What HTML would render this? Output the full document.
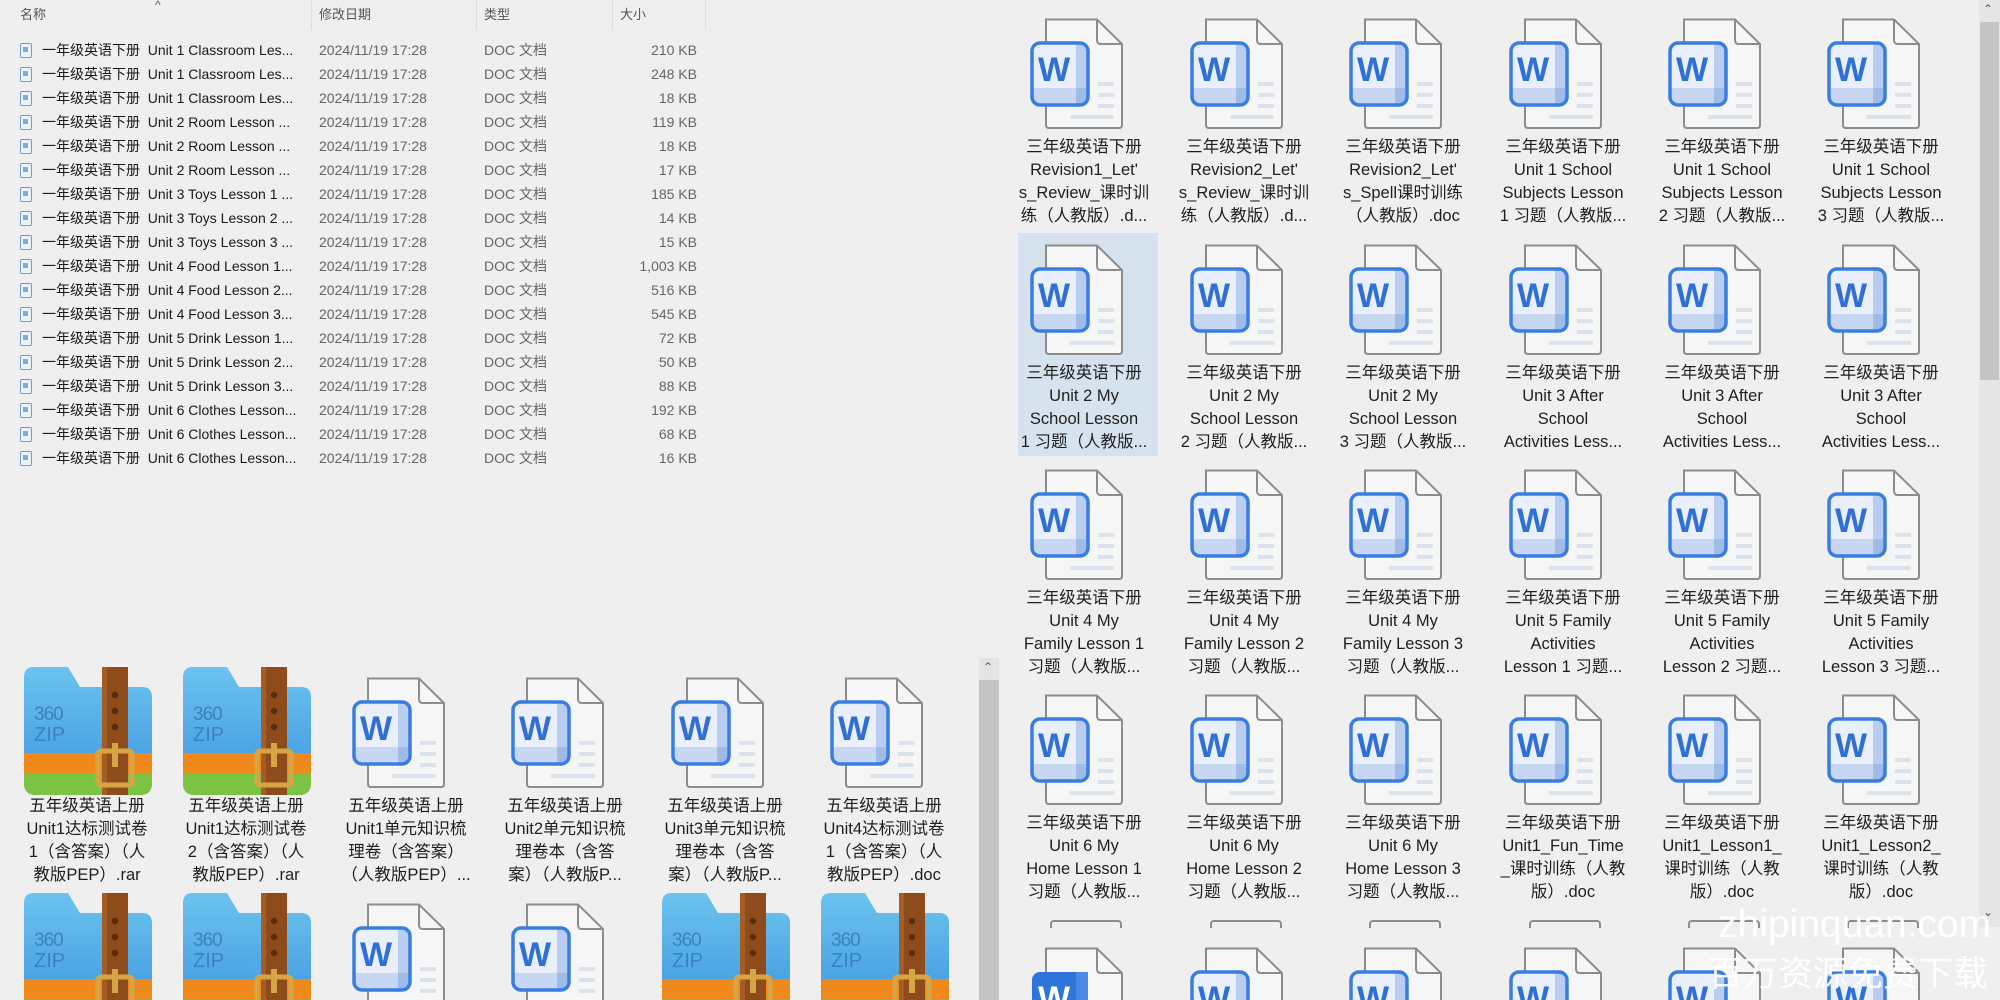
<!DOCTYPE html>
<html><head><meta charset="utf-8">
<style>
*{box-sizing:border-box}
html,body{margin:0;width:2000px;height:1000px;overflow:hidden}
body{background:#efefef;font-family:"Liberation Sans","Noto Sans CJK SC",sans-serif;color:#1e1e1e}
#wrap{position:relative;width:2000px;height:1000px;overflow:hidden}
.hd{position:absolute;top:0;height:30px;font-size:13px;color:#555;line-height:30px}
.sep{position:absolute;top:0;width:1px;height:30px;background:#dedede}
.row{position:absolute;left:0;width:720px;height:24px;font-size:14px;line-height:24px;white-space:nowrap}
.row .ic{position:absolute;left:20px;top:5px;width:12px;height:15px;border:1.5px solid #6e9bd8;border-radius:2px;background:#eef4fc}
.row .ic:after{content:"";position:absolute;left:2px;top:3px;width:5px;height:5px;background:#7fa8e0}
.row .n{position:absolute;left:42px;color:#1a1a1a}
.row .d{position:absolute;left:319px;color:#666}
.row .t{position:absolute;left:484px;color:#666}
.row .s{position:absolute;left:600px;width:97px;text-align:right;color:#666}
.it{position:absolute;width:160px;height:215px}
.it svg{position:absolute;left:16px;top:0;width:128px;height:112px;overflow:visible}
.it .w{position:absolute;left:28px;top:32px;width:44px;text-align:center;font:bold 34px/40px "Liberation Sans",sans-serif;color:#2f6fd6}
.it .w.f{color:#fff}
.it p{position:absolute;top:118px;left:0;width:160px;margin:0;text-align:center;font-size:16.5px;line-height:23px;color:#1e1e1e;white-space:nowrap}
.it .z3{position:absolute;left:27px;top:28px;font:19px/20px "Liberation Sans",sans-serif;color:#3b80c2;letter-spacing:-1px}
.it .z4{position:absolute;left:27px;top:47px;font:20px/22px "Liberation Sans",sans-serif;color:#3b80c2}
.sel{position:absolute;left:1018px;top:233px;width:140px;height:223px;background:#d6e3ef}
</style></head><body><div id="wrap">
<svg width="0" height="0" style="position:absolute">
<defs>
<symbol id="doc" viewBox="0 0 128 112">
<path d="M26 1.5H77L102 26V107Q102 110 99 110H29Q26 110 26 107Z" fill="#f6f6f6" stroke="#8c8c8c" stroke-width="2"/>
<path d="M77 1.5V22Q77 26 81 26H102" fill="none" stroke="#8c8c8c" stroke-width="2"/>
<rect x="78" y="64" width="16" height="4" fill="#dbe2ec"/>
<rect x="78" y="75" width="16" height="4" fill="#dbe2ec"/>
<rect x="78" y="86" width="16" height="4" fill="#dbe2ec"/>
<rect x="50" y="97" width="44" height="4" fill="#dbe2ec"/>
<rect x="12" y="25" width="56" height="62" rx="8" fill="#e9f0fb"/>
<rect x="13" y="70" width="54" height="16" fill="#c7d7f2"/>
<rect x="56" y="26" width="11" height="60" fill="#b8cdef"/>
<rect x="56" y="70" width="11" height="16" fill="#9fbbe9"/>
<rect x="12" y="25" width="56" height="62" rx="8" fill="none" stroke="#3a7de0" stroke-width="3.5"/>
</symbol>
<symbol id="docf" viewBox="0 0 128 112">
<path d="M26 1.5H77L102 26V107Q102 110 99 110H29Q26 110 26 107Z" fill="#f6f6f6" stroke="#8c8c8c" stroke-width="2"/>
<path d="M77 1.5V22Q77 26 81 26H102" fill="none" stroke="#8c8c8c" stroke-width="2"/>
<rect x="12" y="25" width="56" height="62" rx="8" fill="#2f74da"/>
<rect x="56" y="25" width="12" height="62" fill="#4a8ae6"/>
</symbol>
<clipPath id="zc"><path d="M0 10Q0 0 10 0H44L56 20H118Q128 20 128 30V116Q128 128 116 128H12Q0 128 0 116Z"/></clipPath>
<linearGradient id="zg" x1="0" y1="0" x2="0" y2="1"><stop offset="0" stop-color="#6cc3ef"/><stop offset="1" stop-color="#3b95dc"/></linearGradient>
<symbol id="zip" viewBox="0 0 128 128">
<g clip-path="url(#zc)">
<rect width="128" height="128" fill="url(#zg)"/>
<rect y="86" width="128" height="20" fill="#f0891b"/>
<rect y="106" width="128" height="22" fill="#7cc243"/>
</g>
<rect x="78" y="0" width="26" height="128" fill="#8e4c1c"/>
<rect x="78" y="0" width="5" height="128" fill="#a55d25"/>
<circle cx="91" cy="28" r="3.2" fill="#5a2c0c"/>
<circle cx="91" cy="44" r="3.2" fill="#5a2c0c"/>
<circle cx="91" cy="60" r="3.2" fill="#5a2c0c"/>
<rect x="74" y="84" width="34" height="34" rx="3" fill="none" stroke="#d8a545" stroke-width="5"/>
<rect x="88" y="76" width="6" height="24" fill="#d8a545"/>
</symbol>
</defs></svg>

<div class="hd" style="left:20px">名称</div>
<div class="hd" style="left:155px;top:-10px;font-size:12px">^</div>
<div class="hd" style="left:319px">修改日期</div>
<div class="hd" style="left:484px">类型</div>
<div class="hd" style="left:620px">大小</div>
<div class="sep" style="left:311px"></div>
<div class="sep" style="left:476px"></div>
<div class="sep" style="left:612px"></div>
<div class="sep" style="left:705px"></div>

<div class="row" style="top:38px"><i class="ic"></i><span class="n">一年级英语下册&nbsp; Unit 1 Classroom Les...</span><span class="d">2024/11/19 17:28</span><span class="t">DOC 文档</span><span class="s">210 KB</span></div>
<div class="row" style="top:62px"><i class="ic"></i><span class="n">一年级英语下册&nbsp; Unit 1 Classroom Les...</span><span class="d">2024/11/19 17:28</span><span class="t">DOC 文档</span><span class="s">248 KB</span></div>
<div class="row" style="top:86px"><i class="ic"></i><span class="n">一年级英语下册&nbsp; Unit 1 Classroom Les...</span><span class="d">2024/11/19 17:28</span><span class="t">DOC 文档</span><span class="s">18 KB</span></div>
<div class="row" style="top:110px"><i class="ic"></i><span class="n">一年级英语下册&nbsp; Unit 2 Room Lesson ...</span><span class="d">2024/11/19 17:28</span><span class="t">DOC 文档</span><span class="s">119 KB</span></div>
<div class="row" style="top:134px"><i class="ic"></i><span class="n">一年级英语下册&nbsp; Unit 2 Room Lesson ...</span><span class="d">2024/11/19 17:28</span><span class="t">DOC 文档</span><span class="s">18 KB</span></div>
<div class="row" style="top:158px"><i class="ic"></i><span class="n">一年级英语下册&nbsp; Unit 2 Room Lesson ...</span><span class="d">2024/11/19 17:28</span><span class="t">DOC 文档</span><span class="s">17 KB</span></div>
<div class="row" style="top:182px"><i class="ic"></i><span class="n">一年级英语下册&nbsp; Unit 3 Toys Lesson 1 ...</span><span class="d">2024/11/19 17:28</span><span class="t">DOC 文档</span><span class="s">185 KB</span></div>
<div class="row" style="top:206px"><i class="ic"></i><span class="n">一年级英语下册&nbsp; Unit 3 Toys Lesson 2 ...</span><span class="d">2024/11/19 17:28</span><span class="t">DOC 文档</span><span class="s">14 KB</span></div>
<div class="row" style="top:230px"><i class="ic"></i><span class="n">一年级英语下册&nbsp; Unit 3 Toys Lesson 3 ...</span><span class="d">2024/11/19 17:28</span><span class="t">DOC 文档</span><span class="s">15 KB</span></div>
<div class="row" style="top:254px"><i class="ic"></i><span class="n">一年级英语下册&nbsp; Unit 4 Food Lesson 1...</span><span class="d">2024/11/19 17:28</span><span class="t">DOC 文档</span><span class="s">1,003 KB</span></div>
<div class="row" style="top:278px"><i class="ic"></i><span class="n">一年级英语下册&nbsp; Unit 4 Food Lesson 2...</span><span class="d">2024/11/19 17:28</span><span class="t">DOC 文档</span><span class="s">516 KB</span></div>
<div class="row" style="top:302px"><i class="ic"></i><span class="n">一年级英语下册&nbsp; Unit 4 Food Lesson 3...</span><span class="d">2024/11/19 17:28</span><span class="t">DOC 文档</span><span class="s">545 KB</span></div>
<div class="row" style="top:326px"><i class="ic"></i><span class="n">一年级英语下册&nbsp; Unit 5 Drink Lesson 1...</span><span class="d">2024/11/19 17:28</span><span class="t">DOC 文档</span><span class="s">72 KB</span></div>
<div class="row" style="top:350px"><i class="ic"></i><span class="n">一年级英语下册&nbsp; Unit 5 Drink Lesson 2...</span><span class="d">2024/11/19 17:28</span><span class="t">DOC 文档</span><span class="s">50 KB</span></div>
<div class="row" style="top:374px"><i class="ic"></i><span class="n">一年级英语下册&nbsp; Unit 5 Drink Lesson 3...</span><span class="d">2024/11/19 17:28</span><span class="t">DOC 文档</span><span class="s">88 KB</span></div>
<div class="row" style="top:398px"><i class="ic"></i><span class="n">一年级英语下册&nbsp; Unit 6 Clothes Lesson...</span><span class="d">2024/11/19 17:28</span><span class="t">DOC 文档</span><span class="s">192 KB</span></div>
<div class="row" style="top:422px"><i class="ic"></i><span class="n">一年级英语下册&nbsp; Unit 6 Clothes Lesson...</span><span class="d">2024/11/19 17:28</span><span class="t">DOC 文档</span><span class="s">68 KB</span></div>
<div class="row" style="top:446px"><i class="ic"></i><span class="n">一年级英语下册&nbsp; Unit 6 Clothes Lesson...</span><span class="d">2024/11/19 17:28</span><span class="t">DOC 文档</span><span class="s">16 KB</span></div>

<div class="it" style="left:7px;top:677px"><svg viewBox="0 0 128 128" style="top:-10px;left:17px;height:128px"><use href="#zip"/></svg><span class="z3">360</span><span class="z4">ZIP</span><p>五年级英语上册<br>Unit1达标测试卷<br>1（含答案）（人<br>教版PEP）.rar</p></div>
<div class="it" style="left:166px;top:677px"><svg viewBox="0 0 128 128" style="top:-10px;left:17px;height:128px"><use href="#zip"/></svg><span class="z3">360</span><span class="z4">ZIP</span><p>五年级英语上册<br>Unit1达标测试卷<br>2（含答案）（人<br>教版PEP）.rar</p></div>
<div class="it" style="left:326px;top:677px"><svg viewBox="0 0 128 112"><use href="#doc"/></svg><b class="w">W</b><p>五年级英语上册<br>Unit1单元知识梳<br>理卷（含答案）<br>（人教版PEP）...</p></div>
<div class="it" style="left:485px;top:677px"><svg viewBox="0 0 128 112"><use href="#doc"/></svg><b class="w">W</b><p>五年级英语上册<br>Unit2单元知识梳<br>理卷本（含答<br>案）（人教版P...</p></div>
<div class="it" style="left:645px;top:677px"><svg viewBox="0 0 128 112"><use href="#doc"/></svg><b class="w">W</b><p>五年级英语上册<br>Unit3单元知识梳<br>理卷本（含答<br>案）（人教版P...</p></div>
<div class="it" style="left:804px;top:677px"><svg viewBox="0 0 128 112"><use href="#doc"/></svg><b class="w">W</b><p>五年级英语上册<br>Unit4达标测试卷<br>1（含答案）（人<br>教版PEP）.doc</p></div>

<div class="it" style="left:7px;top:903px"><svg viewBox="0 0 128 128" style="top:-10px;left:17px;height:128px"><use href="#zip"/></svg><span class="z3">360</span><span class="z4">ZIP</span></div>
<div class="it" style="left:166px;top:903px"><svg viewBox="0 0 128 128" style="top:-10px;left:17px;height:128px"><use href="#zip"/></svg><span class="z3">360</span><span class="z4">ZIP</span></div>
<div class="it" style="left:326px;top:903px"><svg viewBox="0 0 128 112"><use href="#doc"/></svg><b class="w">W</b></div>
<div class="it" style="left:485px;top:903px"><svg viewBox="0 0 128 112"><use href="#doc"/></svg><b class="w">W</b></div>
<div class="it" style="left:645px;top:903px"><svg viewBox="0 0 128 128" style="top:-10px;left:17px;height:128px"><use href="#zip"/></svg><span class="z3">360</span><span class="z4">ZIP</span></div>
<div class="it" style="left:804px;top:903px"><svg viewBox="0 0 128 128" style="top:-10px;left:17px;height:128px"><use href="#zip"/></svg><span class="z3">360</span><span class="z4">ZIP</span></div>

<div style="position:absolute;left:979px;top:658px;width:20px;height:342px;background:#e4e4e4"></div>
<div style="position:absolute;left:979px;top:680px;width:20px;height:320px;background:#c3c3c3"></div>
<div style="position:absolute;left:983px;top:660px;font-size:12px;color:#555">&#8963;</div>

<div class="sel"></div>
<div class="it" style="left:1004px;top:18px"><svg viewBox="0 0 128 112"><use href="#doc"/></svg><b class="w">W</b><p>三年级英语下册<br>Revision1_Let'<br>s_Review_课时训<br>练（人教版）.d...</p></div>
<div class="it" style="left:1164px;top:18px"><svg viewBox="0 0 128 112"><use href="#doc"/></svg><b class="w">W</b><p>三年级英语下册<br>Revision2_Let'<br>s_Review_课时训<br>练（人教版）.d...</p></div>
<div class="it" style="left:1323px;top:18px"><svg viewBox="0 0 128 112"><use href="#doc"/></svg><b class="w">W</b><p>三年级英语下册<br>Revision2_Let'<br>s_Spell课时训练<br>（人教版）.doc</p></div>
<div class="it" style="left:1483px;top:18px"><svg viewBox="0 0 128 112"><use href="#doc"/></svg><b class="w">W</b><p>三年级英语下册<br>Unit 1 School<br>Subjects Lesson<br>1 习题（人教版...</p></div>
<div class="it" style="left:1642px;top:18px"><svg viewBox="0 0 128 112"><use href="#doc"/></svg><b class="w">W</b><p>三年级英语下册<br>Unit 1 School<br>Subjects Lesson<br>2 习题（人教版...</p></div>
<div class="it" style="left:1801px;top:18px"><svg viewBox="0 0 128 112"><use href="#doc"/></svg><b class="w">W</b><p>三年级英语下册<br>Unit 1 School<br>Subjects Lesson<br>3 习题（人教版...</p></div>

<div class="it" style="left:1004px;top:244px"><svg viewBox="0 0 128 112"><use href="#doc"/></svg><b class="w">W</b><p>三年级英语下册<br>Unit 2 My<br>School Lesson<br>1 习题（人教版...</p></div>
<div class="it" style="left:1164px;top:244px"><svg viewBox="0 0 128 112"><use href="#doc"/></svg><b class="w">W</b><p>三年级英语下册<br>Unit 2 My<br>School Lesson<br>2 习题（人教版...</p></div>
<div class="it" style="left:1323px;top:244px"><svg viewBox="0 0 128 112"><use href="#doc"/></svg><b class="w">W</b><p>三年级英语下册<br>Unit 2 My<br>School Lesson<br>3 习题（人教版...</p></div>
<div class="it" style="left:1483px;top:244px"><svg viewBox="0 0 128 112"><use href="#doc"/></svg><b class="w">W</b><p>三年级英语下册<br>Unit 3 After<br>School<br>Activities Less...</p></div>
<div class="it" style="left:1642px;top:244px"><svg viewBox="0 0 128 112"><use href="#doc"/></svg><b class="w">W</b><p>三年级英语下册<br>Unit 3 After<br>School<br>Activities Less...</p></div>
<div class="it" style="left:1801px;top:244px"><svg viewBox="0 0 128 112"><use href="#doc"/></svg><b class="w">W</b><p>三年级英语下册<br>Unit 3 After<br>School<br>Activities Less...</p></div>

<div class="it" style="left:1004px;top:469px"><svg viewBox="0 0 128 112"><use href="#doc"/></svg><b class="w">W</b><p>三年级英语下册<br>Unit 4 My<br>Family Lesson 1<br>习题（人教版...</p></div>
<div class="it" style="left:1164px;top:469px"><svg viewBox="0 0 128 112"><use href="#doc"/></svg><b class="w">W</b><p>三年级英语下册<br>Unit 4 My<br>Family Lesson 2<br>习题（人教版...</p></div>
<div class="it" style="left:1323px;top:469px"><svg viewBox="0 0 128 112"><use href="#doc"/></svg><b class="w">W</b><p>三年级英语下册<br>Unit 4 My<br>Family Lesson 3<br>习题（人教版...</p></div>
<div class="it" style="left:1483px;top:469px"><svg viewBox="0 0 128 112"><use href="#doc"/></svg><b class="w">W</b><p>三年级英语下册<br>Unit 5 Family<br>Activities<br>Lesson 1 习题...</p></div>
<div class="it" style="left:1642px;top:469px"><svg viewBox="0 0 128 112"><use href="#doc"/></svg><b class="w">W</b><p>三年级英语下册<br>Unit 5 Family<br>Activities<br>Lesson 2 习题...</p></div>
<div class="it" style="left:1801px;top:469px"><svg viewBox="0 0 128 112"><use href="#doc"/></svg><b class="w">W</b><p>三年级英语下册<br>Unit 5 Family<br>Activities<br>Lesson 3 习题...</p></div>

<div class="it" style="left:1004px;top:694px"><svg viewBox="0 0 128 112"><use href="#doc"/></svg><b class="w">W</b><p>三年级英语下册<br>Unit 6 My<br>Home Lesson 1<br>习题（人教版...</p></div>
<div class="it" style="left:1164px;top:694px"><svg viewBox="0 0 128 112"><use href="#doc"/></svg><b class="w">W</b><p>三年级英语下册<br>Unit 6 My<br>Home Lesson 2<br>习题（人教版...</p></div>
<div class="it" style="left:1323px;top:694px"><svg viewBox="0 0 128 112"><use href="#doc"/></svg><b class="w">W</b><p>三年级英语下册<br>Unit 6 My<br>Home Lesson 3<br>习题（人教版...</p></div>
<div class="it" style="left:1483px;top:694px"><svg viewBox="0 0 128 112"><use href="#doc"/></svg><b class="w">W</b><p>三年级英语下册<br>Unit1_Fun_Time<br>_课时训练（人教<br>版）.doc</p></div>
<div class="it" style="left:1642px;top:694px"><svg viewBox="0 0 128 112"><use href="#doc"/></svg><b class="w">W</b><p>三年级英语下册<br>Unit1_Lesson1_<br>课时训练（人教<br>版）.doc</p></div>
<div class="it" style="left:1801px;top:694px"><svg viewBox="0 0 128 112"><use href="#doc"/></svg><b class="w">W</b><p>三年级英语下册<br>Unit1_Lesson2_<br>课时训练（人教<br>版）.doc</p></div>

<div style="position:absolute;left:1050px;top:920px;width:72px;height:8px;border:2px solid #8c8c8c;border-bottom:none;border-radius:4px 4px 0 0"></div>
<div style="position:absolute;left:1210px;top:920px;width:72px;height:8px;border:2px solid #8c8c8c;border-bottom:none;border-radius:4px 4px 0 0"></div>
<div style="position:absolute;left:1369px;top:920px;width:72px;height:8px;border:2px solid #8c8c8c;border-bottom:none;border-radius:4px 4px 0 0"></div>
<div style="position:absolute;left:1529px;top:920px;width:72px;height:8px;border:2px solid #8c8c8c;border-bottom:none;border-radius:4px 4px 0 0"></div>
<div style="position:absolute;left:1688px;top:920px;width:72px;height:8px;border:2px solid #8c8c8c;border-bottom:none;border-radius:4px 4px 0 0"></div>
<div style="position:absolute;left:1847px;top:920px;width:72px;height:8px;border:2px solid #8c8c8c;border-bottom:none;border-radius:4px 4px 0 0"></div>

<div class="it" style="left:1004px;top:947px"><svg viewBox="0 0 128 112"><use href="#docf"/></svg><b class="w f">W</b></div>
<div class="it" style="left:1164px;top:947px"><svg viewBox="0 0 128 112"><use href="#doc"/></svg><b class="w">W</b></div>
<div class="it" style="left:1323px;top:947px"><svg viewBox="0 0 128 112"><use href="#doc"/></svg><b class="w">W</b></div>
<div class="it" style="left:1483px;top:947px"><svg viewBox="0 0 128 112"><use href="#doc"/></svg><b class="w">W</b></div>
<div class="it" style="left:1642px;top:947px"><svg viewBox="0 0 128 112"><use href="#doc"/></svg><b class="w">W</b></div>
<div class="it" style="left:1801px;top:947px"><svg viewBox="0 0 128 112"><use href="#doc"/></svg><b class="w">W</b></div>

<div style="position:absolute;left:1979px;top:0;width:21px;height:927px;background:#e6e6e6"></div>
<div style="position:absolute;left:1980px;top:22px;width:19px;height:358px;background:#c4c4c4"></div>
<div style="position:absolute;left:1983px;top:2px;font-size:12px;color:#555">&#8963;</div>
<div style="position:absolute;left:1983px;top:905px;font-size:12px;color:#555">&#8964;</div>

<div style="position:absolute;left:1718px;top:902px;font:39px/46px 'Liberation Sans',sans-serif;color:rgba(255,255,255,.92);white-space:nowrap">zhipinquan.com</div>
<div style="position:absolute;left:1708px;top:954px;font:35px/42px 'Liberation Sans','Noto Sans CJK SC',sans-serif;color:rgba(255,255,255,.92);white-space:nowrap">百万资源免费下载</div>
</div></body></html>
